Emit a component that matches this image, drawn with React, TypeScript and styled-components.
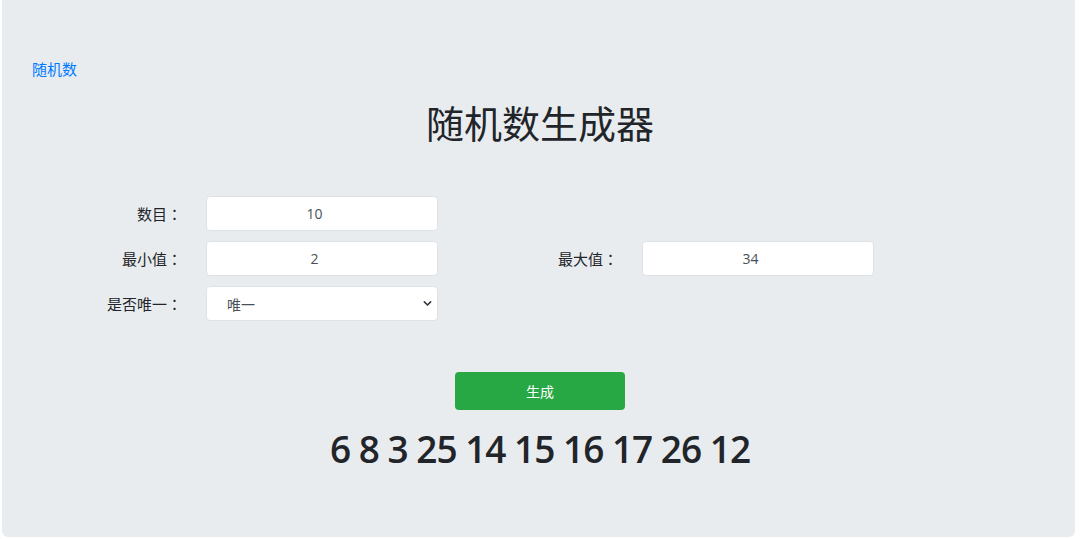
import React, { useState } from "react";
import styled, { createGlobalStyle } from "styled-components";

const Global = createGlobalStyle`
  html, body { margin: 0; padding: 0; background: #ffffff; }
  body {
    font-family: "Open Sans", "Noto Sans CJK SC", sans-serif;
    color: #212529;
  }
  * { box-sizing: border-box; }
  input[type="number"]::-webkit-inner-spin-button {
    opacity: 0;
  }
`;

const Page = styled.div`
  width: 1080px;
  height: 539px;
  padding: 0 5px 2px 2px;
`;

const Jumbotron = styled.div`
  height: 537px;
  background: #e9ecef;
  border-radius: 0 0 6px 6px;
  padding: 57px 0 0 3px;
  display: flex;
  flex-direction: column;
`;

const NavLink = styled.a`
  align-self: flex-start;
  margin-left: 27px;
  font-size: 15px;
  line-height: 24px;
  color: #007bff;
  text-decoration: none;
  font-family: "Noto Sans CJK SC", sans-serif;
`;

const Title = styled.h1`
  margin: 18px 0 0 0;
  text-align: center;
  font-family: "Noto Sans CJK SC", sans-serif;
  font-weight: 400;
  font-size: 38px;
  line-height: 46px;
  color: #212529;
`;

const Form = styled.div`
  margin: 51px 0 0 23px;
  display: grid;
  grid-template-columns: 154px 232px 156px 232px;
  column-gap: 24px;
  row-gap: 10px;
  grid-auto-rows: 35px;
`;

const Label = styled.label<{ $col: number }>`
  grid-column: ${(p) => p.$col};
  display: flex;
  align-items: center;
  justify-content: flex-end;
  font-family: "Noto Sans CJK SC", sans-serif;
  font-size: 15px;
  color: #212529;
`;

const Colon = styled.span`
  font-family: "Noto Sans CJK TC", sans-serif;
`;

const Input = styled.input<{ $col: number }>`
  grid-column: ${(p) => p.$col};
  width: 100%;
  height: 35px;
  border: 1px solid #dee2e6;
  border-radius: 4px;
  background: #ffffff;
  padding: 0 12px;
  text-align: center;
  font-family: "Open Sans", sans-serif;
  font-size: 14px;
  color: #495057;
  outline: none;
`;

const SelectWrap = styled.div<{ $col: number }>`
  grid-column: ${(p) => p.$col};
  position: relative;
`;

const Select = styled.select`
  appearance: none;
  width: 100%;
  height: 35px;
  border: 1px solid #dee2e6;
  border-radius: 4px;
  background: #ffffff;
  padding: 0 0 0 20px;
  font-family: "Noto Sans CJK SC", sans-serif;
  font-size: 14px;
  color: #495057;
  outline: none;
`;

const Chevron = styled.svg`
  position: absolute;
  right: 6px;
  top: 13px;
  pointer-events: none;
`;

const Button = styled.button`
  align-self: center;
  margin-top: 51px;
  width: 170px;
  height: 38px;
  border: none;
  border-radius: 4px;
  background: #28a745;
  color: #ffffff;
  font-family: "Noto Sans CJK SC", sans-serif;
  font-size: 14px;
  cursor: pointer;
`;

const Result = styled.div`
  margin-top: 15px;
  text-align: center;
  font-family: "Open Sans", sans-serif;
  font-weight: 600;
  font-size: 37px;
  letter-spacing: -1px;
  line-height: 47px;
  color: #212529;
`;

export default function App() {
  const [count, setCount] = useState("10");
  const [min, setMin] = useState("2");
  const [max, setMax] = useState("34");
  const [unique, setUnique] = useState("1");
  const [nums] = useState([6, 8, 3, 25, 14, 15, 16, 17, 26, 12]);

  return (
    <>
      <Global />
      <Page>
        <Jumbotron>
          <NavLink href="#">随机数</NavLink>
          <Title>随机数生成器</Title>
          <Form>
            <Label $col={1}>数目<Colon>：</Colon></Label>
            <Input $col={2} type="number" value={count} onChange={(e) => setCount(e.target.value)} />
            <Label $col={1}>最小值<Colon>：</Colon></Label>
            <Input $col={2} type="number" value={min} onChange={(e) => setMin(e.target.value)} />
            <Label $col={3}>最大值<Colon>：</Colon></Label>
            <Input $col={4} type="number" value={max} onChange={(e) => setMax(e.target.value)} />
            <Label $col={1}>是否唯一<Colon>：</Colon></Label>
            <SelectWrap $col={2}>
              <Select value={unique} onChange={(e) => setUnique(e.target.value)}>
                <option value="1">唯一</option>
                <option value="0">不唯一</option>
              </Select>
              <Chevron width="9" height="9" viewBox="0 0 10 10">
                <path d="M1.5 3.2 L5 6.7 L8.5 3.2" fill="none" stroke="#343a40" strokeWidth="1.8" strokeLinecap="round" strokeLinejoin="round" />
              </Chevron>
            </SelectWrap>
          </Form>
          <Button>生成</Button>
          <Result>{nums.join(" ")}</Result>
        </Jumbotron>
      </Page>
    </>
  );
}
